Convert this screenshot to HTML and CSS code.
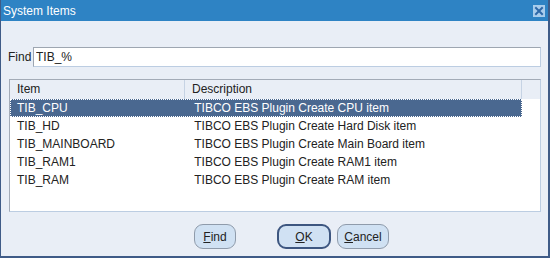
FILE: index.html
```html
<!DOCTYPE html>
<html lang="en">
<head>
    <meta charset="UTF-8">
    <title>System Items</title>
    <link rel="stylesheet" href="styles.css">
</head>
<body>
    <div class="window">
        <div class="titlebar">
            <span class="title">System Items</span>
            <span class="close">
                <svg width="12" height="12" viewBox="0 0 12 12">
                    <path d="M3 3 L9 9 M9 3 L3 9" stroke="#2d68a8" stroke-width="2" stroke-linecap="square"/>
                </svg>
            </span>
        </div>
        <div class="find-row">
            <label for="find">Find</label>
            <input type="text" id="find" value="TIB_%">
        </div>
        <div class="grid">
            <div class="row head">
                <div class="cell c1">Item</div>
                <div class="cell c2">Description</div>
                <div class="cell c3"></div>
            </div>
            <div class="row selected">
                <div class="cell c1">TIB_CPU</div>
                <div class="cell c2">TIBCO EBS Plugin Create CPU item</div>
            </div>
            <div class="row">
                <div class="cell c1">TIB_HD</div>
                <div class="cell c2">TIBCO EBS Plugin Create Hard Disk item</div>
            </div>
            <div class="row">
                <div class="cell c1">TIB_MAINBOARD</div>
                <div class="cell c2">TIBCO EBS Plugin Create Main Board item</div>
            </div>
            <div class="row">
                <div class="cell c1">TIB_RAM1</div>
                <div class="cell c2">TIBCO EBS Plugin Create RAM1 item</div>
            </div>
            <div class="row">
                <div class="cell c1">TIB_RAM</div>
                <div class="cell c2">TIBCO EBS Plugin Create RAM item</div>
            </div>
        </div>
        <div class="buttons">
            <button class="btn btn-find"><u>F</u>ind</button>
            <button class="btn btn-ok"><u>O</u>K</button>
            <button class="btn btn-cancel"><u>C</u>ancel</button>
        </div>
    </div>
</body>
</html>
```

FILE: styles.css
```css
body {
    margin: 0;
    font-family: "Liberation Sans", Arial, sans-serif;
    font-size: 12px;
    color: #222;
}
.window {
    width: 550px;
    height: 258px;
    box-sizing: border-box;
    border-left: 1px solid #3f5b87;
    border-right: 2px solid #3f5b87;
    border-bottom: 2px solid #3f5b87;
    background-color: #e9eef6;
    display: flex;
    flex-direction: column;
}
.titlebar {
    height: 21px;
    background-color: #2e83c4;
    display: flex;
    align-items: center;
    justify-content: space-between;
    padding: 0 3px 0 2px;
    color: white;
}
.title {
    font-size: 12px;
}
.close {
    width: 12px;
    height: 12px;
    margin-top: 1px;
    background-color: #a9cdec;
    display: flex;
}
.find-row {
    margin-top: 26px;
    display: flex;
    align-items: center;
    padding: 0 7px 0 7px;
}
.find-row label {
    width: 25px;
}
.find-row input {
    flex: 1;
    height: 20px;
    box-sizing: border-box;
    margin: 0;
    padding: 0 2px;
    border-top: 1px solid #9ea6b1;
    border-left: 1px solid #9ea6b1;
    border-right: 1px solid #bccde2;
    border-bottom: 1px solid #bccde2;
    background: white;
    font-family: "Liberation Sans", Arial, sans-serif;
    font-size: 12px;
    color: #222;
    outline: none;
}
.grid {
    margin: 12px 7px 0 8px;
    height: 133px;
    box-sizing: border-box;
    background: white;
    border-top: 1px solid #a3abb7;
    border-left: 1px solid #a3abb7;
    border-right: 1px solid #bccde2;
    border-bottom: 1px solid #bccde2;
}
.row {
    display: flex;
    height: 18px;
    align-items: center;
    width: 512px;
    box-sizing: border-box;
}
.row.head {
    width: auto;
    background-color: #e9eef6;
    height: 19px;
}
.head .cell {
    height: 19px;
    line-height: 19px;
    border-right: 1px solid #c6d3e4;
    box-sizing: border-box;
}
.cell {
    padding-left: 7px;
    white-space: nowrap;
}
.c1 {
    width: 175px;
}
.c2 {
    width: 337px;
}
.head .c3 {
    flex: 1;
    padding: 0;
    border-right: none;
}
.row.selected {
    background-color: #4a6890;
    color: white;
    outline: 1px dotted #ffffff;
    outline-offset: -1px;
}
.buttons {
    margin-top: 12px;
    display: flex;
    padding-left: 193px;
}
.btn {
    height: 25px;
    box-sizing: border-box;
    background-color: #d0e1f3;
    border: 1px solid #8f9bab;
    border-radius: 9px;
    font-family: "Liberation Sans", Arial, sans-serif;
    font-size: 12px;
    color: #222;
    padding: 0;
}
.btn-find {
    width: 42px;
}
.btn-ok {
    width: 54px;
    margin-left: 41px;
    border: 2px solid #3d5680;
}
.btn-cancel {
    width: 52px;
    margin-left: 6px;
}
```
